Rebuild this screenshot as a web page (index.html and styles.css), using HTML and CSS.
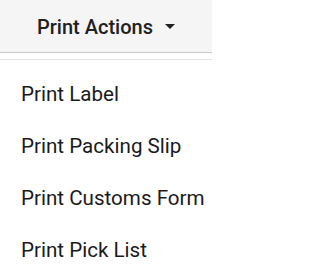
FILE: index.html
```html
<!DOCTYPE html>
<html>
<head>
<meta charset="utf-8">
<link rel="stylesheet" href="styles.css">
</head>
<body>
<div class="page">
  <div class="bar">
    <button class="toggle">
      <span class="label">Print Actions</span>
      <svg class="caret" width="10" height="5" viewBox="0 0 10 5"><path d="M0 0H10L5 5Z" fill="#212121"/></svg>
    </button>
  </div>
  <ul class="menu">
    <li class="item">Print Label</li>
    <li class="item">Print Packing Slip</li>
    <li class="item">Print Customs Form</li>
    <li class="item">Print Pick List</li>
  </ul>
</div>
</body>
</html>
```
FILE: styles.css
```css
html, body {
  margin: 0;
  padding: 0;
  background: #ffffff;
  font-family: Roboto, "Noto Sans", sans-serif;
}
.page {
  width: 212px;
  height: 278px;
  overflow: hidden;
}
.bar {
  height: 52px;
  background: #f5f5f5;
  border-bottom: 1px solid #c8c8c8;
  display: flex;
  align-items: center;
  justify-content: center;
}
.toggle {
  display: flex;
  align-items: center;
  gap: 12px;
  background: none;
  border: 0;
  padding: 0;
  margin-top: 1px;
  font-family: inherit;
  font-size: 20px;
  font-weight: 500;
  color: #212121;
  white-space: nowrap;
}
.caret {
  display: block;
}
.menu {
  list-style: none;
  margin: 6px 0 0;
  padding: 0;
  border-top: 1px solid #e4e4e4;
}
.item {
  padding: 0 0 0 21px;
  height: 52px;
  line-height: 52px;
  font-size: 20.6px;
  color: #1a1a1a;
  white-space: nowrap;
}
.item:first-child {
  margin-top: 8px;
}
```
